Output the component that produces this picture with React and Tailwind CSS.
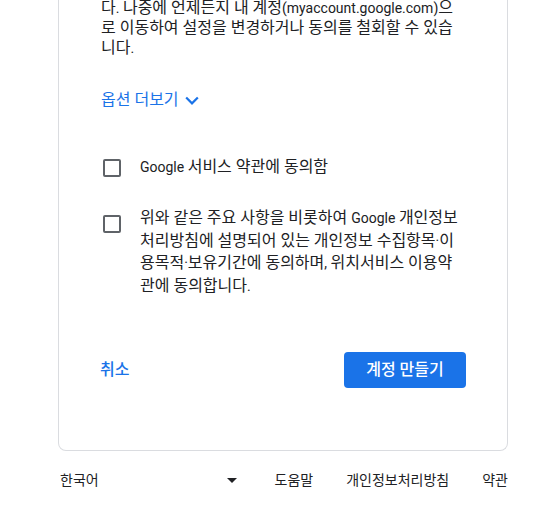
import { useState } from "react";

const font = { fontFamily: "Roboto, 'Noto Sans CJK KR', sans-serif" };

// Korean glyphs in the reference render larger than the Latin text
const HANGUL = /([\uAC00-\uD7A3\u3131-\u318E][\uAC00-\uD7A3\u3131-\u318E ]*)/;

const K = ({ text, size = "text-[16px]" }) =>
  text.split(HANGUL).map((part, i) =>
    HANGUL.test(part) ? (
      <span key={i} className={size}>
        {part}
      </span>
    ) : (
      part
    )
  );

const Checkbox = ({ className, onChange }) => (
  <button
    onClick={onChange}
    className={`h-[18px] w-[18px] shrink-0 rounded-[2px] border-2 border-[#5f6368] bg-white ${className}`}
  />
);

const App = () => {
  const [terms, setTerms] = useState(false);
  const [privacy, setPrivacy] = useState(false);

  return (
    <div className="min-h-[511px] bg-white text-[#202124]" style={font}>
      <div className="ml-[58px] w-[450px] rounded-b-lg border-x border-b border-[#dadce0] pb-[62px]">
        <p className="-mt-[2px] pl-[42px] pr-[40px] text-[14px] leading-[20px]">
          <K text="다. 나중에 언제든지 내 계정(myaccount.google.com)으로 이동하여 설정을 변경하거나 동의를 철회할 수 있습니다." />
        </p>

        <button className="ml-[42px] mt-[32px] flex items-center gap-[5px] text-[14px] leading-[20px] text-[#1a73e8]">
          <K text="옵션 더보기" />
          <svg width="16" height="11" viewBox="5 7 14 10" fill="#1a73e8">
            <path d="M16.59 8.59 12 13.17 7.41 8.59 6 10l6 6 6-6z" />
          </svg>
        </button>

        <div className="mt-[47px] flex flex-col pl-[44px] pr-[42px]">
          <label className="flex items-start gap-[19px]">
            <Checkbox className="mt-[2px]" onChange={() => setTerms(!terms)} />
            <span className="text-[14px] leading-[20px]">
              <K text="Google 서비스 약관에 동의함" />
            </span>
          </label>
          <label className="mt-[30px] flex items-start gap-[19px]">
            <Checkbox className="mt-[8px]" onChange={() => setPrivacy(!privacy)} />
            <span className="text-[14px] leading-[22.5px]">
              <K text="위와 같은 주요 사항을 비롯하여 Google 개인정보처리방침에 설명되어 있는 개인정보 수집항목·이용목적·보유기간에 동의하며, 위치서비스 이용약관에 동의합니다." />
            </span>
          </label>
        </div>

        <div className="mt-[55px] flex items-center justify-between pl-[41px] pr-[41px]">
          <button className="text-[14px] font-medium text-[#1a73e8]">
            <K text="취소" />
          </button>
          <button className="h-[36px] w-[122px] rounded-[4px] bg-[#1a73e8] text-[14px] font-medium text-white">
            <K text="계정 만들기" />
          </button>
        </div>
      </div>

      <div className="ml-[60px] mt-[19px] flex w-[448px] items-center text-[12px] leading-[20px] text-[#202124]">
        <div className="flex w-[177px] items-center justify-between">
          <span>
            <K text="한국어" size="text-[14px]" />
          </span>
          <svg width="10" height="5" viewBox="0 0 10 5">
            <path d="M0 0h10L5 5z" fill="#202124" />
          </svg>
        </div>
        <div className="ml-auto flex gap-[33px]">
          <a>
            <K text="도움말" size="text-[14px]" />
          </a>
          <a>
            <K text="개인정보처리방침" size="text-[14px]" />
          </a>
          <a>
            <K text="약관" size="text-[14px]" />
          </a>
        </div>
      </div>
    </div>
  );
};

export default App;
